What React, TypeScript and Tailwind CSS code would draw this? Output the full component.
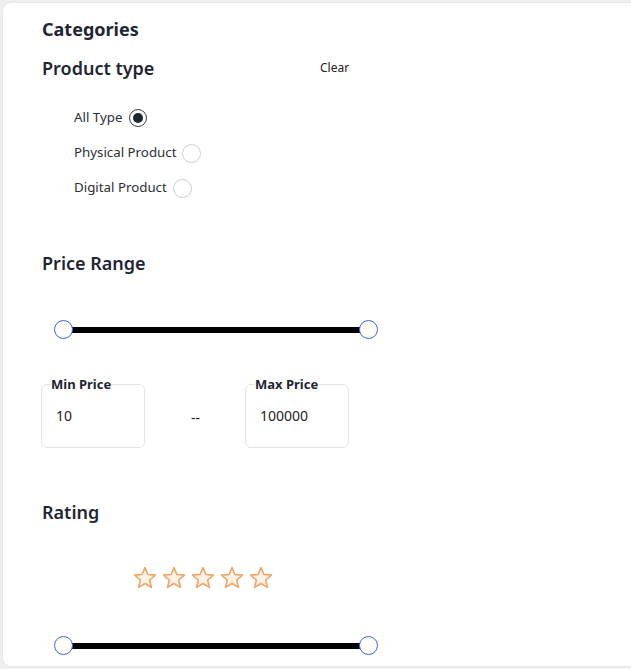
import React from "react";

function Radio({ checked }: { checked?: boolean }) {
  return checked ? (
    <span className="flex h-[18px] w-[18px] items-center justify-center rounded-full border-[1.5px] border-[#3a3f47]">
      <span className="h-[10px] w-[10px] rounded-full bg-[#1e2635]" />
    </span>
  ) : (
    <span className="h-[19px] w-[19px] rounded-full border border-[#cfcfcf] bg-white" />
  );
}

function Slider() {
  return (
    <div className="ml-[12px] flex w-[324px] items-center">
      <span className="relative z-10 h-[19px] w-[19px] shrink-0 rounded-full border-[1.5px] border-[#3b64f3] bg-white" />
      <span className="-mx-[9px] h-[6px] flex-1 bg-black" />
      <span className="relative z-10 h-[19px] w-[19px] shrink-0 rounded-full border-[1.5px] border-[#3b64f3] bg-white" />
    </div>
  );
}

function Star() {
  return (
    <svg width="24" height="24" viewBox="0 0 24 24">
      <polygon
        points="12,1.6 14.9,8.5 22.4,9.1 16.7,14 18.4,21.4 12,17.5 5.6,21.4 7.3,14 1.6,9.1 9.1,8.5"
        fill="#fdf2e5"
        stroke="#f0a465"
        strokeWidth="1.6"
        strokeLinejoin="round"
      />
    </svg>
  );
}

function PriceBox({ label, value }: { label: string; value: string }) {
  return (
    <fieldset className="h-[72px] w-[104px] rounded-md border border-[#e4e4e4] pl-[9px]">
      <legend className="px-0 text-[13px] font-bold leading-[16px] text-[#1e2533]">{label}</legend>
      <div className="pl-[5px] pt-[14px] text-[14px] leading-[20px] text-[#222]">{value}</div>
    </fieldset>
  );
}

export default function App() {
  const font = { fontFamily: '"Noto Sans", "Open Sans", sans-serif' };
  return (
    <div className="h-[669px] w-[631px] overflow-hidden bg-[#efefef] pl-[3px] pt-[3px]" style={font}>
      <div className="h-[663px] w-[660px] rounded-lg bg-white pl-[38px] pt-[12px] shadow-[0_0_2px_rgba(0,0,0,0.12)]">
        <div className="pl-px">
          <div className="h-[28px] text-[18px] font-bold leading-[28px] text-[#1e2533]">Categories</div>

          <div className="mt-[11px] flex h-[28px] items-center">
            <div className="w-[278px] text-[18px] font-semibold leading-[28px] text-[#1e2533]">Product type</div>
            <div className="text-[12px] text-[#222]">Clear</div>
          </div>

          <div className="mt-[24px] flex flex-col gap-[11px] pl-[32px] text-[13.3px] text-[#2b2f36]">
            <div className="flex h-[24px] items-center gap-[7px]">
              <span>All Type</span>
              <Radio checked />
            </div>
            <div className="flex h-[24px] items-center gap-[6px]">
              <span>Physical Product</span>
              <Radio />
            </div>
            <div className="flex h-[24px] items-center gap-[6px]">
              <span>Digital Product</span>
              <Radio />
            </div>
          </div>

          <div className="mt-[49px] h-[28px] text-[18px] font-semibold leading-[28px] text-[#1e2533]">Price Range</div>
        </div>

        <div className="mt-[43px] pl-px">
          <Slider />
        </div>

        <div className="mt-[37px] flex w-[308px] items-center justify-between">
          <PriceBox label="Min Price" value="10" />
          <span className="ml-[1px] mt-[10px] text-[14px] text-[#222]">--</span>
          <PriceBox label="Max Price" value="100000" />
        </div>

        <div className="mt-[50px] h-[28px] pl-px text-[18px] font-semibold leading-[28px] text-[#1e2533]">Rating</div>

        <div className="mt-[40px] flex gap-[5px] pl-[92px]">
          <Star />
          <Star />
          <Star />
          <Star />
          <Star />
        </div>

        <div className="mt-[46px] pl-px">
          <Slider />
        </div>
      </div>
    </div>
  );
}
